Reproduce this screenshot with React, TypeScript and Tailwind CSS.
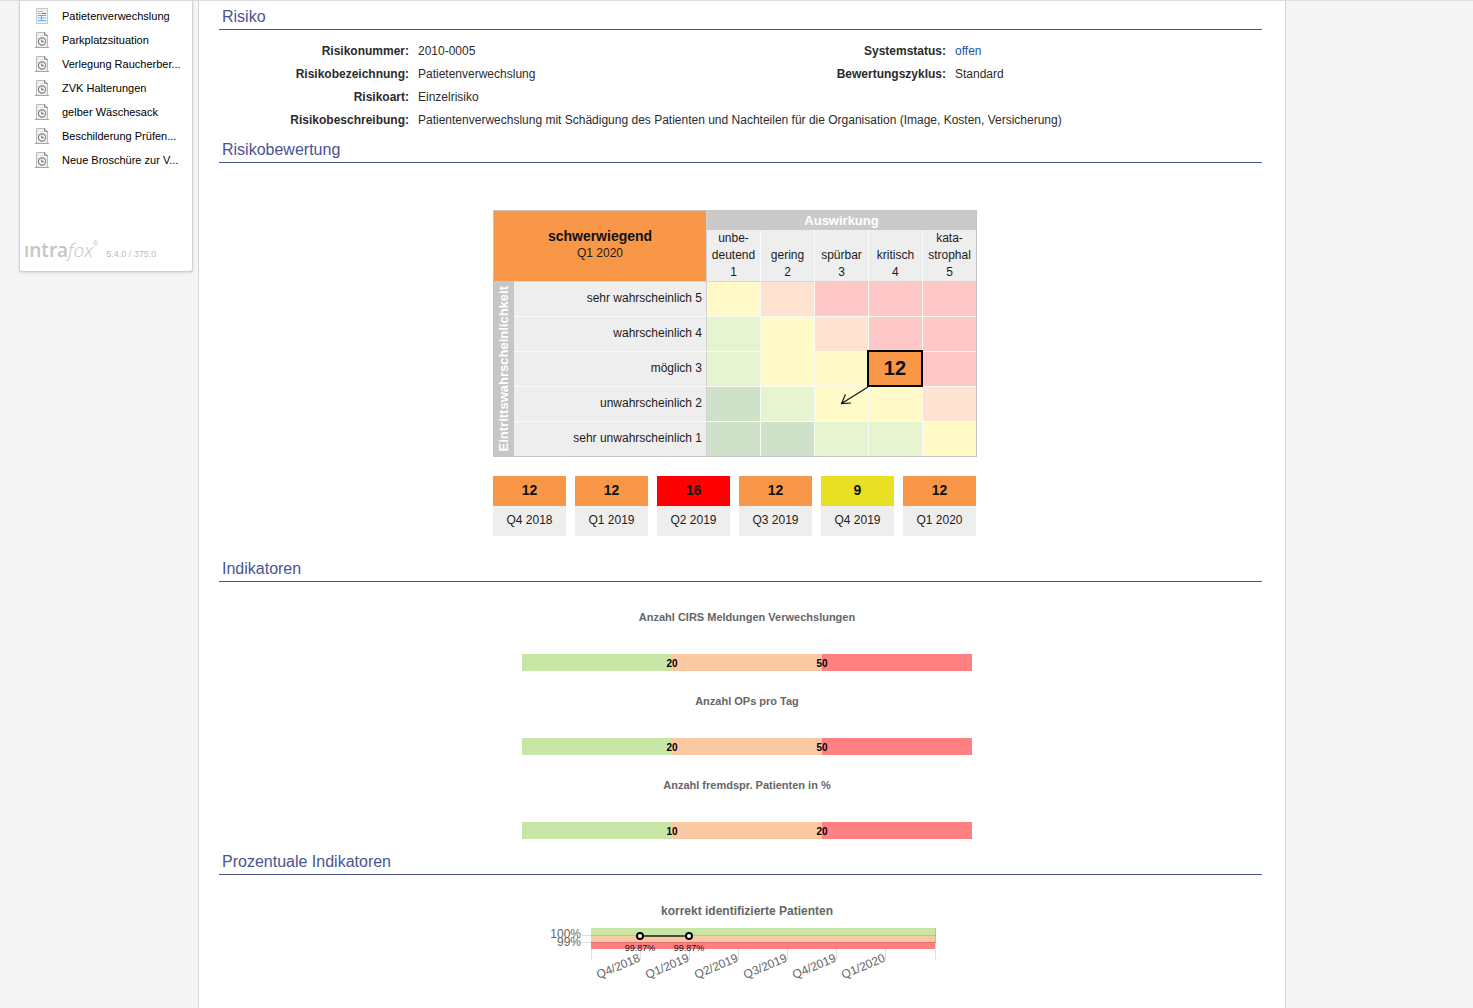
import React from 'react';

const menuItems = [
  'Patietenverwechslung',
  'Parkplatzsituation',
  'Verlegung Raucherber...',
  'ZVK Halterungen',
  'gelber Wäschesack',
  'Beschilderung Prüfen...',
  'Neue Broschüre zur V...',
];

const impacts = [
  ['unbe-', 'deutend', '1'],
  ['', 'gering', '2'],
  ['', 'spürbar', '3'],
  ['', 'kritisch', '4'],
  ['kata-', 'strophal', '5'],
];

const Y = 'bg-[#fffac8]';
const O = 'bg-[#ffe3d2]';
const R = 'bg-[#ffc8c8]';
const G = 'bg-[#e6f4d0]';
const D = 'bg-[#cfe1c9]';

const matrix = [
  { label: 'sehr wahrscheinlich 5', cells: [Y, O, R, R, R] },
  { label: 'wahrscheinlich 4', cells: [G, Y, O, R, R] },
  { label: 'möglich 3', cells: [G, Y, Y, R, R] },
  { label: 'unwahrscheinlich 2', cells: [D, G, Y, Y, O] },
  { label: 'sehr unwahrscheinlich 1', cells: [D, D, G, G, Y] },
];

const history = [
  { value: 12, quarter: 'Q4 2018', color: 'bg-[#f89747]' },
  { value: 12, quarter: 'Q1 2019', color: 'bg-[#f89747]' },
  { value: 16, quarter: 'Q2 2019', color: 'bg-[#ff0000]' },
  { value: 12, quarter: 'Q3 2019', color: 'bg-[#f89747]' },
  { value: 9, quarter: 'Q4 2019', color: 'bg-[#e9e026]' },
  { value: 12, quarter: 'Q1 2020', color: 'bg-[#f89747]' },
];

const indicators = [
  { title: 'Anzahl CIRS Meldungen Verwechslungen', low: 20, high: 50 },
  { title: 'Anzahl OPs pro Tag', low: 20, high: 50 },
  { title: 'Anzahl fremdspr. Patienten in %', low: 10, high: 20 },
];

const quarters = ['Q4/2018', 'Q1/2019', 'Q2/2019', 'Q3/2019', 'Q4/2019', 'Q1/2020'];

function FormIcon() {
  return (
    <svg className="w-[14px] h-4" viewBox="0 0 14 16" aria-hidden="true">
      <path d="M1.500 .5h11v15h-11z" fill="#eceff1" stroke="#989da0" strokeDasharray="1 1" />
      <path d="M3 3.500h5M3 5.500h3" stroke="#b4b9bc" />
      <path d="M7 5.500h4" stroke="#3f8fd8" />
      <rect x="3" y="7" width="8" height="6" fill="#ffffff" />
      <path d="M3 7.500h8M3 10h8M3 12.500h8M6.500 7v6" fill="none" stroke="#5aa0df" strokeWidth="0.900" />
    </svg>
  );
}

function ClockIcon() {
  return (
    <svg className="w-[14px] h-4" viewBox="0 0 14 16" aria-hidden="true">
      <path d="M1.500 .5h8l3 3v12h-11z" fill="#eeeeee" stroke="#b8b8b8" />
      <path d="M9.500 .5v3h3z" fill="#ffffff" stroke="#8f8f8f" />
      <path d="M0 15.500h14" stroke="#a5a5a5" />
      <circle cx="7" cy="9.500" r="3.600" fill="#f8f8f8" stroke="#858585" strokeWidth="1.200" />
      <path d="M6.800 7.500v2.300h2" fill="none" stroke="#555555" />
    </svg>
  );
}

function SectionTitle({ children }: { children: React.ReactNode }) {
  return (
    <h2 className="h-[26px] pl-[3px] text-base leading-[26px] text-[#4a5491] border-b border-[#4a5491]">
      {children}
    </h2>
  );
}

function RiskMatrix() {
  return (
    <table className="w-[484px] table-fixed border-separate border-spacing-0 border border-[#c4c4c4] text-xs leading-[17px] text-[#1c1c1c]">
      <colgroup>
        <col className="w-5" />
        <col className="w-48" />
        <col span={5} />
      </colgroup>
      <thead>
        <tr className="h-[19px]">
          <th colSpan={2} rowSpan={2} className="p-0 pb-0.5 bg-[#f89747] font-normal">
            <div className="text-sm leading-[17px] font-bold text-[#111111]">schwerwiegend</div>
            <div>Q1 2020</div>
          </th>
          <th colSpan={5} className="p-0 border-l border-[#d2d2d2] bg-[#cacaca] text-[13px] leading-[17px] font-bold text-white">
            Auswirkung
          </th>
        </tr>
        <tr className="h-[51px]">
          {impacts.map((lines, i) => (
            <th
              key={lines[1]}
              className={`p-0 align-bottom bg-[#eeeeee] font-normal border-l ${i === 0 ? 'border-[#d2d2d2]' : 'border-[#fafafa]'}`}
            >
              {lines.map((line) => line && <div key={line}>{line}</div>)}
            </th>
          ))}
        </tr>
      </thead>
      <tbody>
        {matrix.map((row, r) => (
          <tr key={row.label} className="h-[35px]">
            {r === 0 && (
              <th rowSpan={5} className="p-0 bg-[#c6c6c6] text-white">
                <div className="mx-auto [writing-mode:vertical-rl] rotate-180 text-[13px] leading-5 font-bold">
                  Eintrittswahrscheinlichkeit
                </div>
              </th>
            )}
            <th
              className={`p-0 pr-1 pb-0.5 bg-[#eeeeee] text-right font-normal border-t ${r === 0 ? 'border-[#d6d6d6]' : 'border-[#fafafa]'}`}
            >
              {row.label}
            </th>
            {row.cells.map((color, c) => (
              <td
                key={c}
                className={`relative p-0 border-l border-t ${color} ${c === 0 ? 'border-l-[#d2d2d2]' : 'border-l-[#fafaf5]'} ${r === 0 ? 'border-t-[#d6d6d6]' : 'border-t-[#fafaf5]'}`}
              >
                {r === 2 && c === 3 && (
                  <>
                    <div className="absolute -inset-px -left-0.5 -top-0.5 z-10 flex items-center justify-center pb-0.5 border-2 border-black bg-[#f89747] text-xl font-bold text-[#111111]">
                      12
                    </div>
                    <svg
                      className="absolute -left-[29px] top-[34px] z-10 w-[30px] h-5"
                      viewBox="0 0 30 20"
                      fill="none"
                      stroke="#111111"
                      strokeWidth="1.200"
                      aria-hidden="true"
                    >
                      <path d="M28 1L1.500 17.500M5.500 8.500L1.500 17.500L11 17" />
                    </svg>
                  </>
                )}
              </td>
            ))}
          </tr>
        ))}
      </tbody>
    </table>
  );
}

function IndicatorBar({ title, low, high }: { title: string; low: number; high: number }) {
  return (
    <div className="w-[450px]">
      <h3 className="text-[11px] leading-4 font-bold text-center text-[#666666]">{title}</h3>
      <div className="mt-[29px] flex h-[17px] text-[10px] leading-[19px] font-bold text-black">
        <div className="flex-1 bg-[#c8e7a7]" />
        <div className="relative flex-1 bg-[#fac9a2]">
          <span className="absolute left-0 -translate-x-1/2">{low}</span>
        </div>
        <div className="relative flex-1 bg-[#ff8080]">
          <span className="absolute left-0 -translate-x-1/2">{high}</span>
        </div>
      </div>
    </div>
  );
}

function PercentChart() {
  return (
    <svg className="w-[450px] h-[64px]" viewBox="0 0 450 64" role="img" aria-label="korrekt identifizierte Patienten">
      <rect x="69" y="6" width="345" height="8" fill="#c8e7a7" />
      <rect x="69" y="14" width="345" height="7" fill="#fac9a2" />
      <rect x="69" y="20" width="344" height="7" fill="#ff8080" />
      <path d="M60 13.500h354M60 20.500h354" stroke="#000000" strokeOpacity="0.12" />
      <path
        d="M69.500 27v11M118.500 27v11M167.500 27v11M216.500 27v11M265.500 27v11M314.500 27v11M363.500 27v11M413.500 6v32"
        stroke="#000000"
        strokeOpacity="0.12"
      />
      <g fontSize="12" fill="#666666" textAnchor="end">
        <text x="59" y="16">100%</text>
        <text x="59" y="24">99%</text>
        {quarters.map((q, i) => (
          <text key={q} transform={`translate(${119 + i * 49} 39) rotate(-23)`}>
            {q}
          </text>
        ))}
      </g>
      <path d="M118 14h49" stroke="#222222" strokeWidth="1.500" />
      <g fontSize="9" fill="#111111" textAnchor="middle">
        <text x="118" y="29">99.87%</text>
        <text x="167" y="29">99.87%</text>
      </g>
      <g fill="#ffffff" stroke="#000000" strokeWidth="2">
        <circle cx="118" cy="14" r="3" />
        <circle cx="167" cy="14" r="3" />
      </g>
    </svg>
  );
}

export default function App() {
  return (
    <div className="min-h-screen flex items-stretch gap-[5px] pl-[19px] pr-[187px] bg-[#f5f5f5] border-t border-[#dddddd] font-['Liberation_Sans',Arial,sans-serif]">
      <aside className="w-[174px] shrink-0 self-start bg-white border border-t-0 border-[#d2d2d2] rounded-b-[3px] shadow-sm">
        <nav className="pt-[3px]">
          <ul>
            {menuItems.map((item, i) => (
              <li key={item}>
                <a href="#" className="flex h-6 items-center gap-[13px] pl-[15px] text-[11px] whitespace-nowrap text-black">
                  {i === 0 ? <FormIcon /> : <ClockIcon />}
                  {item}
                </a>
              </li>
            ))}
          </ul>
        </nav>
        <div className="mt-[66px] flex items-baseline h-[33px] pl-1 text-[#c4c4c4] whitespace-nowrap">
          <span className="font-['Open_Sans',sans-serif] text-[19px] leading-6 font-semibold">ıntra</span>
          <span className="font-['Open_Sans',sans-serif] text-[19px] leading-6 font-light italic">fox</span>
          <span className="self-start text-[7px] leading-3">®</span>
          <span className="ml-2 text-[9px] text-[#b9bdb9]">5.4.0 / 375.0</span>
        </div>
      </aside>

      <main className="flex-1 min-w-0 pl-5 pr-[23px] pt-[3px] bg-white border-x border-[#d6d6d6]">
        <SectionTitle>Risiko</SectionTitle>
        <dl className="grid grid-cols-[190px_1fr_212px_1fr] gap-x-[9px] pt-[10px] pb-[5px] text-xs leading-[23px] text-[#2b2b2b]">
          <dt className="text-right font-bold">Risikonummer:</dt>
          <dd>2010-0005</dd>
          <dt className="text-right font-bold">Systemstatus:</dt>
          <dd>
            <a href="#" className="text-[#1c54a0]">offen</a>
          </dd>
          <dt className="text-right font-bold">Risikobezeichnung:</dt>
          <dd>Patietenverwechslung</dd>
          <dt className="text-right font-bold">Bewertungszyklus:</dt>
          <dd>Standard</dd>
          <dt className="text-right font-bold">Risikoart:</dt>
          <dd className="col-span-3">Einzelrisiko</dd>
          <dt className="text-right font-bold">Risikobeschreibung:</dt>
          <dd className="col-span-3">
            Patientenverwechslung mit Schädigung des Patienten und Nachteilen für die Organisation (Image, Kosten, Versicherung)
          </dd>
        </dl>

        <SectionTitle>Risikobewertung</SectionTitle>
        <div className="flex flex-col items-center pt-[47px] pb-5 pr-[11px]">
          <RiskMatrix />
          <ul className="mt-[19px] flex w-[484px] gap-[9px] text-center">
            {history.map((h) => (
              <li key={h.quarter} className="w-[73px]">
                <div className={`h-[30px] text-sm leading-[29px] font-bold text-[#111111] ${h.color}`}>{h.value}</div>
                <div className="h-[30px] bg-[#eeeeee] text-xs leading-[28px] text-[#1c1c1c]">{h.quarter}</div>
              </li>
            ))}
          </ul>
        </div>

        <SectionTitle>Indikatoren</SectionTitle>
        <div className="flex flex-col items-center gap-[22px] pt-[27px] pb-[10px] pl-[13px]">
          {indicators.map((ind) => (
            <IndicatorBar key={ind.title} title={ind.title} low={ind.low} high={ind.high} />
          ))}
        </div>

        <SectionTitle>Prozentuale Indikatoren</SectionTitle>
        <div className="flex flex-col items-center pt-[25px] pl-[13px]">
          <h3 className="text-xs leading-[22px] font-bold text-[#666666]">korrekt identifizierte Patienten</h3>
          <PercentChart />
        </div>
      </main>
    </div>
  );
}
